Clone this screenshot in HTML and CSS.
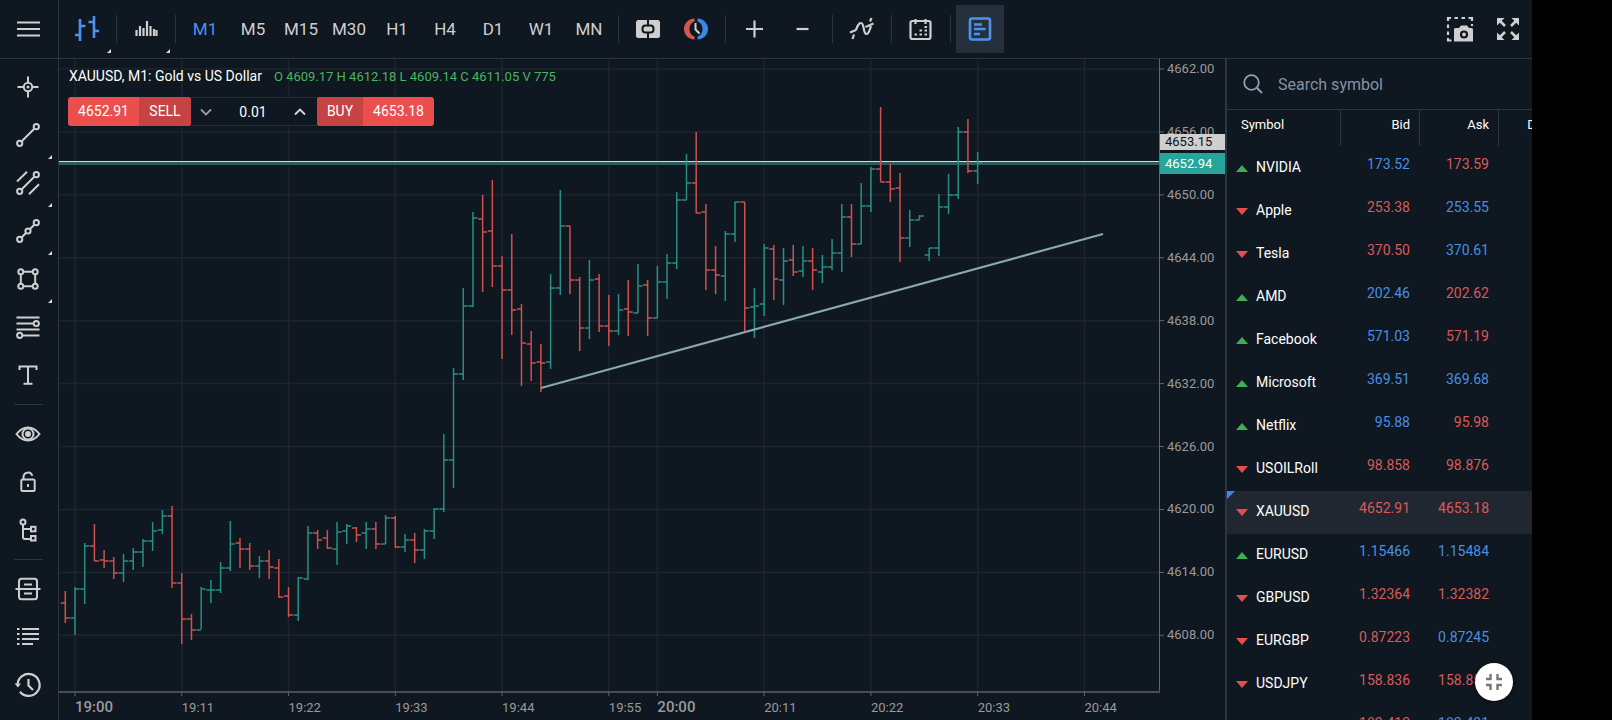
FILE: index.html
```
<!DOCTYPE html>
<html lang="en">
<head>
    <meta charset="UTF-8">
    <meta name="viewport" content="width=device-width, initial-scale=1.0">
    <title>XAUUSD, M1</title>
    <link rel="stylesheet" href="styles.css">
</head>
<body>
<div class="app">
    <header class="topbar">
        <button class="menu" aria-label="Menu">
            <svg width="24" height="24" viewBox="0 0 24 24"><path d="M1 5.500h23M1 12h23M1 18.500h23"/></svg>
        </button>
        <nav class="tools">
            <button class="tool active more" aria-label="Chart type">
                <svg width="26" height="28" viewBox="0 0 26 28" class="bold"><path d="M6 4v22M1 20h5M6 11h5.500M20 1v22M14.500 7H20M20 16h5"/></svg>
            </button>
            <span class="sep"></span>
            <button class="tool more" aria-label="Volumes">
                <svg width="24" height="24" viewBox="0 0 24 24" class="thick"><path d="M2.500 19v-6M6 19V9M9.500 19v-8M13 19V4M16.500 19V9M20 19v-7M22.500 19v-6"/></svg>
            </button>
            <span class="sep"></span>
            <button class="tool active">M1</button>
            <button class="tool">M5</button>
            <button class="tool">M15</button>
            <button class="tool">M30</button>
            <button class="tool">H1</button>
            <button class="tool">H4</button>
            <button class="tool">D1</button>
            <button class="tool">W1</button>
            <button class="tool">MN</button>
            <span class="sep"></span>
            <button class="tool" aria-label="Quick trade">
                <svg width="24" height="18" viewBox="0 0 24 18"><rect width="24" height="18" rx="2.500" fill="#cfcfcf" stroke="none"/><path d="M12 0v5M12 13v5" stroke="#0f1720"/><rect x="6.500" y="5.500" width="11" height="7" rx="3" stroke="#0f1720"/></svg>
            </button>
            <button class="tool" aria-label="Session">
                <svg width="26" height="24" viewBox="0 0 26 24"><path d="M11.500 1.500C5 2 1 6.500 1 12s4 10 10.500 10.500v-3C8 18.500 6.500 15 6.500 12S8 5.500 11.500 4.500z" fill="#d4564e" stroke="none"/><path d="M14.500 1.500C21 2 25 6.500 25 12s-4 10-10.500 10.500v-3c3.500-1 5-4.500 5-7.500s-1.500-6.500-5-7.500z" fill="#3b86e6" stroke="none"/><path d="M12.500 6v6.500l4 4"/></svg>
            </button>
            <span class="sep"></span>
            <button class="tool" aria-label="Zoom in">
                <svg width="24" height="24" viewBox="0 0 24 24" class="thick"><path d="M11.500 3.500v17M3 12h17"/></svg>
            </button>
            <button class="tool" aria-label="Zoom out">
                <svg width="24" height="24" viewBox="0 0 24 24" class="thick"><path d="M5.500 12h12"/></svg>
            </button>
            <span class="sep"></span>
            <button class="tool" aria-label="Indicators">
                <svg width="26" height="24" viewBox="0 0 26 24" class="thick"><path d="M1 15.500l6-2.500M3.500 22l1.500-4.500M7 13c1.500-4 2.500-7 5-7 3.500 0 2 11 5.500 11 2.500 0 3-4 4.500-8M16.500 10l8-3.500M21 4.500L22.500 1"/></svg>
            </button>
            <span class="sep"></span>
            <button class="tool" aria-label="Calendar">
                <svg width="24" height="24" viewBox="0 0 24 24" class="thick"><rect x="1.500" y="4" width="20" height="18" rx="2"/><path d="M6.500 2v5M16.500 2v5"/><path d="M5.500 17.500h2.500M10.500 17.500H13M15.500 17.500H18M10.500 13.500H13M15.500 13.500H18M15.500 10H18"/></svg>
            </button>
            <span class="sep"></span>
            <button class="tool active pressed" aria-label="Market watch">
                <svg width="24" height="24" viewBox="0 0 24 24" class="bold"><rect x="2" y="1.500" width="20" height="21" rx="2"/><path d="M6 7.500h8M6 12h11.500M6 17h6"/></svg>
            </button>
        </nav>
        <div class="tools-right">
            <button class="tool" aria-label="Screenshot">
                <svg width="28" height="26" viewBox="0 0 28 26" class="thick"><path d="M2 5V2h3M8.500 2h3.500M15.500 2H19M22.500 2H26v3M26 8v2M2 8.500V12M2 15.500V19M2 22v2.500h3.500"/><path d="M8 13.500q0-1.500 1.500-1.500H13l2-2.500h6l2 2.500h2.500q1.500 0 1.500 1.500v12H8z" fill="#cfcfcf" stroke="none"/><circle cx="18" cy="18.500" r="3" stroke="#0f1720"/></svg>
            </button>
            <button class="tool" aria-label="Full screen">
                <svg width="24" height="24" viewBox="0 0 24 24" class="bold"><path d="M3 3l6 6M21 3l-6 6M3 21l6-6M21 21l-6-6"/><path d="M1 1h7.500L1 8.500zM23 1h-7.500l7.500 7.500zM1 23h7.500L1 15.500zM23 23h-7.500l7.500-7.500z" fill="#cfcfcf" stroke="none"/></svg>
            </button>
        </div>
    </header>

    <aside class="sidebar">
        <button class="tool" aria-label="Crosshair">
            <svg width="24" height="24" viewBox="0 0 24 24"><path d="M12 1.500v6M12 16.500v6M1.500 12h6M16.500 12h6"/><circle cx="12" cy="12" r="4.200"/><circle cx="12" cy="12" r="1.500" fill="#cfcfcf" stroke="none"/></svg>
        </button>
        <button class="tool more" aria-label="Line">
            <svg width="24" height="24" viewBox="0 0 24 24"><circle cx="3.700" cy="20.300" r="2.600"/><circle cx="20.300" cy="3.700" r="2.600"/><path d="M5.500 18.500l13-13"/></svg>
        </button>
        <button class="tool more" aria-label="Channel">
            <svg width="24" height="24" viewBox="0 0 24 24"><circle cx="3.700" cy="20.300" r="2.600"/><circle cx="20.300" cy="3.700" r="2.600"/><path d="M5.500 18.500l13-13M1 10.500L11 .800M13 23.200l10-10"/></svg>
        </button>
        <button class="tool more" aria-label="Polyline">
            <svg width="24" height="24" viewBox="0 0 24 24"><circle cx="3.700" cy="20.300" r="2.600"/><circle cx="12" cy="12" r="2.600"/><circle cx="20.300" cy="3.700" r="2.600"/><path d="M5.500 18.500l4.500-4.500M14 10l4.500-4.500"/></svg>
        </button>
        <button class="tool more" aria-label="Shapes">
            <svg width="24" height="24" viewBox="0 0 24 24"><circle cx="4.800" cy="4.800" r="2.500"/><circle cx="19.200" cy="4.800" r="2.500"/><circle cx="4.800" cy="19.200" r="2.500"/><circle cx="19.200" cy="19.200" r="2.500"/><path d="M7.500 4.800h9M7.500 19.200h9M4.800 7.500v9M19.200 7.500v9"/></svg>
        </button>
        <button class="tool" aria-label="Fibonacci">
            <svg width="24" height="24" viewBox="0 0 24 24"><path d="M.500 2.500h23M.500 8.500h17M.500 14.500h23M6.500 20.500h17"/><circle cx="20.300" cy="8.500" r="2.600"/><circle cx="3.700" cy="20.300" r="2.600"/></svg>
        </button>
        <button class="tool" aria-label="Text">
            <svg width="24" height="24" viewBox="0 0 24 24"><path d="M3.500 7V3.500h17V7M12 3.500v17M7.500 20.700h9"/></svg>
        </button>
        <span class="sep"></span>
        <button class="tool" aria-label="Show objects">
            <svg width="26" height="24" viewBox="0 0 26 24"><path d="M1.500 12C5 7.500 9 5.500 13 5.500s8 2 11.500 6.500c-3.500 4.500-7.500 6.500-11.500 6.500S5 16.500 1.500 12z"/><circle cx="13" cy="12" r="5.500"/><circle cx="13" cy="12" r="2" fill="#cfcfcf"/></svg>
        </button>
        <button class="tool" aria-label="Lock">
            <svg width="24" height="24" viewBox="0 0 24 24"><rect x="5.300" y="9.500" width="13.400" height="11.500" rx="1.500"/><path d="M7.500 9.500V7a4.500 4.500 0 0 1 8.800-1.200M12 14v3"/></svg>
        </button>
        <button class="tool" aria-label="Object tree">
            <svg width="24" height="24" viewBox="0 0 24 24"><circle cx="7" cy="4" r="2.500"/><path d="M7 6.500V19q0 2 2 2h6M7 11h8"/><rect x="15" y="8.800" width="4.500" height="4.500"/><rect x="15" y="18" width="4.500" height="4.500"/></svg>
        </button>
        <span class="sep"></span>
        <button class="tool" aria-label="Trade panel">
            <svg width="26" height="24" viewBox="0 0 26 24"><rect x="4" y="1.800" width="18" height="20.400" rx="2.500"/><path d="M.500 12h25M9 7.500h8M9 16.500h8"/></svg>
        </button>
        <button class="tool" aria-label="Orders">
            <svg width="24" height="24" viewBox="0 0 24 24" class="thick"><path d="M1 4h2.500M6 4h17M1 9h2.500M6 9h17M1 14h2.500M6 14h17M1 19h2.500M6 19h11"/></svg>
        </button>
        <button class="tool" aria-label="History">
            <svg width="26" height="26" viewBox="0 0 26 26" class="thick"><path d="M2.600 13A11 11 0 1 1 5 19.800M13.500 7v6.500l4.500 4.500"/><path d="M-.500 11.500h6.500l-3 4z" fill="#cfcfcf" stroke="none"/></svg>
        </button>
    </aside>

    <main class="chart">
        <div class="plot">
            <svg id="plot" width="100%" height="100%"></svg>
            <div class="legend">
                <div class="info"><span class="title">XAUUSD, M1: Gold vs US Dollar</span><span class="ohlc">O 4609.17 H 4612.18 L 4609.14 C 4611.05 V 775</span></div>
                <div class="trade">
                    <button class="sell"><span>4652.91</span><b>SELL</b></button>
                    <div class="volume">
                        <button aria-label="Decrease volume"><svg width="12" height="8" viewBox="0 0 12 8"><path d="M1 1.500l5 5 5-5"/></svg></button>
                        <input type="text" value="0.01" aria-label="Volume">
                        <button class="up" aria-label="Increase volume"><svg width="12" height="8" viewBox="0 0 12 8"><path d="M1 6.500l5-5 5 5"/></svg></button>
                    </div>
                    <button class="buy"><b>BUY</b><span>4653.18</span></button>
                </div>
            </div>
        </div>
        <div class="prices">
            <svg id="prices" width="100%" height="100%"></svg>
            <span class="tag ask">4653.15</span>
            <span class="tag bid">4652.94</span>
        </div>
        <div class="times"><svg id="times" width="100%" height="100%"></svg></div>
    </main>

    <section class="watch">
        <label class="search">
            <svg width="20" height="20" viewBox="0 0 20 20"><circle cx="8.500" cy="8.500" r="7.300"/><path d="M14 14l5 5"/></svg>
            <input type="text" placeholder="Search symbol" aria-label="Search symbol">
        </label>
        <table>
            <thead>
                <tr><th>Symbol</th><th>Bid</th><th>Ask</th><th>Daily %</th></tr>
            </thead>
            <tbody>
                <tr><td class="up">NVIDIA</td><td class="b">173.52</td><td class="r">173.59</td><td></td></tr>
                <tr><td class="down">Apple</td><td class="r">253.38</td><td class="b">253.55</td><td></td></tr>
                <tr><td class="down">Tesla</td><td class="r">370.50</td><td class="b">370.61</td><td></td></tr>
                <tr><td class="up">AMD</td><td class="b">202.46</td><td class="r">202.62</td><td></td></tr>
                <tr><td class="up">Facebook</td><td class="b">571.03</td><td class="r">571.19</td><td></td></tr>
                <tr><td class="up">Microsoft</td><td class="b">369.51</td><td class="b">369.68</td><td></td></tr>
                <tr><td class="up">Netflix</td><td class="b">95.88</td><td class="r">95.98</td><td></td></tr>
                <tr><td class="down">USOILRoll</td><td class="r">98.858</td><td class="r">98.876</td><td></td></tr>
                <tr class="current"><td class="down">XAUUSD</td><td class="r">4652.91</td><td class="r">4653.18</td><td></td></tr>
                <tr><td class="up">EURUSD</td><td class="b">1.15466</td><td class="b">1.15484</td><td></td></tr>
                <tr><td class="down">GBPUSD</td><td class="r">1.32364</td><td class="r">1.32382</td><td></td></tr>
                <tr><td class="down">EURGBP</td><td class="r">0.87223</td><td class="b">0.87245</td><td></td></tr>
                <tr><td class="down">USDJPY</td><td class="r">158.836</td><td class="r">158.855</td><td></td></tr>
                <tr><td class="down">EURJPY</td><td class="r">183.413</td><td class="b">183.431</td><td></td></tr>
            </tbody>
        </table>
        <button class="fab" aria-label="Exit full screen">
            <svg width="18" height="18" viewBox="0 0 18 18"><path d="M1 6h4.500V1M12.500 1v5H17M1 12h4.500v5M12.500 17v-5H17"/></svg>
        </button>
    </section>
</div>
<script src="chart.js"></script>
</body>
</html>
```

FILE: styles.css
```
* {
    box-sizing: border-box;
}

html, body {
    height: 100%;
}

body {
    margin: 0;
    background: #000;
    color: #fff;
    font-family: Roboto, "Liberation Sans", sans-serif;
    font-size: 14px;
    overflow: hidden;
}

button, input {
    font: inherit;
    color: inherit;
    background: none;
    border: 0;
    padding: 0;
    outline: 0;
}

svg {
    display: block;
}

.app {
    display: grid;
    grid-template: 59px minmax(0, 1fr) / 59px minmax(0, 1fr) 307px;
    height: 100%;
    margin-right: 80px;
    background: #0f1720;
}

/* toolbar */
.topbar {
    grid-column: 1 / -1;
    display: flex;
    border-bottom: 1px solid #2d3541;
}

.menu {
    width: 59px;
    padding-left: 16px;
    border-right: 1px solid #2d3541;
}

.tools, .tools-right {
    display: flex;
    align-items: center;
}

.tools {
    padding-left: 4px;
}

.tools-right {
    margin-left: auto;
}

.tool {
    position: relative;
    display: flex;
    align-items: center;
    justify-content: center;
    width: 48px;
    height: 48px;
    flex: none;
    color: #cfcfcf;
    font-size: 17px;
}

.tool svg, .menu svg {
    fill: none;
    stroke: #cfcfcf;
    stroke-width: 2;
    overflow: visible;
}

.tool .thick {
    stroke-width: 2.2;
}

.tool .bold {
    stroke-width: 2.6;
}

.tool.active {
    color: #4a94f0;
}

.tool.active svg {
    stroke: #4a94f0;
}

.tool.pressed {
    background: #25303c;
}

.more::after {
    content: "";
    position: absolute;
    right: 0;
    bottom: 0;
    border: 2px solid;
    border-color: transparent #dcdcdc #dcdcdc transparent;
}

.tools .sep {
    width: 1px;
    height: 28px;
    margin: 0 5px;
    background: #2d3541;
}

/* drawing tools */
.sidebar {
    display: flex;
    flex-direction: column;
    align-items: center;
    padding: 4px 6px 0 4px;
    border-right: 1px solid #2d3541;
    overflow: hidden;
}

.sidebar .sep {
    flex: none;
    width: 29px;
    height: 1px;
    margin: 5px 0;
    background: #2d3541;
}

/* chart */
.chart {
    display: grid;
    grid-template: minmax(0, 1fr) 29px / minmax(0, 1fr) 66px;
}

.plot, .prices {
    position: relative;
    overflow: hidden;
}

.prices {
    border-left: 1px solid #62666f;
}

.times {
    grid-column: 1 / -1;
}

.chart text {
    fill: #9a9a9a;
    font-size: 13px;
}

.chart text.hour {
    font-size: 15px;
    font-weight: 500;
}

.grid {
    stroke: #1d242f;
    stroke-width: 1.5;
}

.tick {
    stroke: #62666f;
}

.edge {
    stroke: #484d58;
    stroke-width: 2;
}

.bull, .bear {
    fill: none;
    stroke-width: 1.5;
}

.bull {
    stroke: #278f85;
}

.bear {
    stroke: #cf504c;
}

.trend {
    stroke: #86a9ae;
    stroke-width: 2.2;
}

.ask-line {
    stroke: #d8dcdc;
}

.bid-line {
    stroke: #2b5b5b;
    stroke-width: 3;
}

.tag {
    position: absolute;
    left: 0;
    right: 0;
    padding-left: 5px;
    font-size: 13px;
}

.tag.ask {
    top: 75px;
    line-height: 16px;
    background: #cfcfcf;
    color: #111;
}

.tag.bid {
    top: 94px;
    line-height: 21px;
    background: #26a69a;
}

.legend {
    position: absolute;
    top: 7px;
    left: 9px;
}

.info {
    display: flex;
    align-items: center;
    gap: 12px;
    height: 20px;
    padding-left: 1px;
    white-space: nowrap;
}

.ohlc {
    color: #4bb563;
    font-size: 13px;
}

.trade {
    display: flex;
    height: 29px;
    margin-top: 11px;
}

.sell, .buy {
    display: flex;
    line-height: 29px;
    border-radius: 3px;
    overflow: hidden;
    background: #ea4f4e;
}

.sell span, .buy span {
    width: 71px;
}

.sell b, .buy b {
    width: 52px;
    background: #c54342;
    font-weight: 400;
}

.buy b {
    width: 46px;
}

.volume {
    display: flex;
    width: 126px;
    border: solid #262e39;
    border-width: 1px 0;
    background: #0f1720;
}

.volume button {
    display: flex;
    align-items: center;
    justify-content: center;
    width: 30px;
}

.volume svg {
    fill: none;
    stroke: #9a9ea5;
    stroke-width: 1.8;
}

.volume .up svg {
    stroke: #d8d8d8;
}

.volume input {
    width: 64px;
    text-align: center;
}

/* market watch */
.watch {
    position: relative;
    border-left: 2px solid #2d3541;
    overflow: hidden;
}

.search {
    display: flex;
    align-items: center;
    gap: 15px;
    height: 51px;
    padding-left: 16px;
    border-bottom: 1px solid #2d3541;
}

.search svg {
    fill: none;
    stroke: #8ea0b4;
    stroke-width: 1.8;
}

.search input {
    width: 200px;
    font-size: 16px;
}

.search input::placeholder {
    color: #8393a6;
    opacity: 1;
}

.watch table {
    width: 351px;
    table-layout: fixed;
    border-collapse: separate;
    border-spacing: 0;
}

.watch th {
    width: 79px;
    height: 36px;
    padding: 0 9px 8px 0;
    border-right: 1px solid #2d3541;
    font-size: 13px;
    font-weight: 400;
    text-align: right;
    white-space: nowrap;
}

.watch th:first-child {
    width: 114px;
    padding-left: 14px;
    text-align: left;
}

.watch td {
    position: relative;
    height: 43px;
    padding: 0 10px 10px 0;
    text-align: right;
}

/* small gap under the header */
.watch tbody::before {
    content: "";
    display: block;
    height: 1px;
}

.watch td:first-child {
    padding: 0 0 4px 29px;
    text-align: left;
}

.watch td:first-child::before {
    content: "";
    position: absolute;
    left: 9px;
    top: 18px;
    border: 6px solid transparent;
}

.watch td.up::before {
    border-width: 0 6px 7px;
    border-bottom-color: #3fae54;
}

.watch td.down::before {
    border-width: 7px 6px 0;
    border-top-color: #e2504d;
}

.watch td.b {
    color: #4a8fe2;
}

.watch td.r {
    color: #da5a5a;
}

.current td {
    background: #212731;
}

.current td:first-child::after {
    content: "";
    position: absolute;
    top: 0;
    left: 0;
    border: 4px solid;
    border-color: #3f86f4 transparent transparent #3f86f4;
}

.fab {
    position: absolute;
    right: 19px;
    bottom: 19px;
    display: flex;
    align-items: center;
    justify-content: center;
    width: 38px;
    height: 38px;
    border-radius: 50%;
    background: #fff;
    box-shadow: 0 1px 4px rgba(0, 0, 0, 0.5);
}

.fab svg {
    fill: none;
    stroke: #777;
    stroke-width: 2.4;
}
```

FILE: chart.js
```
// one entry per minute from 18:59: open, high, low, close (y inside the pane)
const TOP = 59;
const bars = [
    [603,591,623,618], [618,587,635,589], [589,543,604,546], [546,524,561,561], [560,550,568,561],
    [561,557,579,573], [573,554,582,561], [561,548,570,552], [552,539,567,541], [541,522,551,531],
    [530,510,534,516], [516,506,588,583], [583,573,644,619], [619,614,640,630], [630,587,629,589],
    [590,580,603,590], [590,562,593,568], [568,521,571,544], [543,538,568,549], [549,543,570,566],
    [566,556,578,561], [561,550,579,567], [568,559,598,597], [596,587,617,615], [615,577,621,578],
    [579,526,580,533], [533,530,549,540], [538,530,549,548], [549,522,565,532], [531,524,544,526],
    [528,527,542,535], [533,522,549,529], [529,522,549,544], [544,515,544,518], [518,516,548,547],
    [547,534,552,540], [540,533,563,550], [550,529,559,531], [531,508,539,509], [509,434,512,460],
    [460,368,488,374], [374,288,380,306], [306,212,307,218], [219,195,292,232], [231,180,287,266],
    [266,256,359,290], [290,234,335,310], [309,304,386,343], [344,331,381,363], [362,344,392,363],
    [362,274,369,288], [288,190,295,226], [226,226,294,280], [280,277,351,328], [328,260,339,280],
    [279,274,332,326], [326,295,346,331], [331,294,335,310], [309,280,336,312], [313,264,313,286],
    [285,280,336,318], [318,266,318,282], [282,254,299,263], [263,192,269,200], [200,154,200,183],
    [183,132,213,213], [212,204,290,270], [270,246,294,275], [276,231,301,234], [234,202,242,202],
    [202,202,332,308], [307,288,338,306], [304,244,316,248], [249,245,300,279], [280,248,305,261],
    [260,245,276,272], [271,246,277,261], [261,248,290,270], [272,255,283,267], [267,239,270,253],
    [253,204,272,217], [217,204,257,244], [244,183,244,206], [206,167,212,169], [169,107,182,182],
    [182,164,202,189], [188,173,262,238], [238,210,247,220], [220,215,220,216], [255,248,261,248],
    [248,194,256,207], [207,174,214,195], [195,127,199,132], [132,119,173,171], [171,152,184,163]
];

// minutes after 19:00 -> label
const times = {
    0: '19:00', 11: '19:11', 22: '19:22', 33: '19:33', 44: '19:44', 55: '19:55',
    60: '20:00', 71: '20:11', 82: '20:22', 93: '20:33', 104: '20:44'
};

const plotEl = document.getElementById('plot');
const barX = i => 16 + i * 9.706;
const priceY = p => 10 + (4662 - p) * 10.487;
const line = (cls, x1, y1, x2, y2) => `<line class="${cls}" x1="${x1}" y1="${y1}" x2="${x2}" y2="${y2}"/>`;

let plot = '';
let prices = '';
let axis = line('edge', 0, 1, plotEl.clientWidth + 1, 1);

for (let p = 4662; p >= 4608; p -= 6) {
    const y = priceY(p);
    plot += line('grid', 0, y, '100%', y);
    prices += line('tick', 0, y, 4, y) + `<text x="7" y="${y + 4}">${p}.00</text>`;
}

for (const m in times) {
    const x = barX(m);
    plot += line('grid', x, 0, x, '100%');
    axis += line('tick', x, 1, x, 5);
    axis += `<text x="${x}" y="21" class="${m % 60 ? '' : 'hour'}">${times[m]}</text>`;
}

plot += line('bid-line', 0, 104.5, '100%', 104.5) + line('ask-line', 0, 102.5, '100%', 102.5);

bars.forEach(([o, h, l, c], n) => {
    const x = barX(n - 1);
    const d = `M${x} ${h - TOP}V${l - TOP}M${x - 4.5} ${o - TOP}H${x}M${x} ${c - TOP}h4.500`;
    plot += `<path class="${c <= o ? 'bull' : 'bear'}" d="${d}"/>`;
});

plot += line('trend', 482, 329, 1044, 175);

plotEl.innerHTML = plot;
document.getElementById('prices').innerHTML = prices;
document.getElementById('times').innerHTML = axis;
```
